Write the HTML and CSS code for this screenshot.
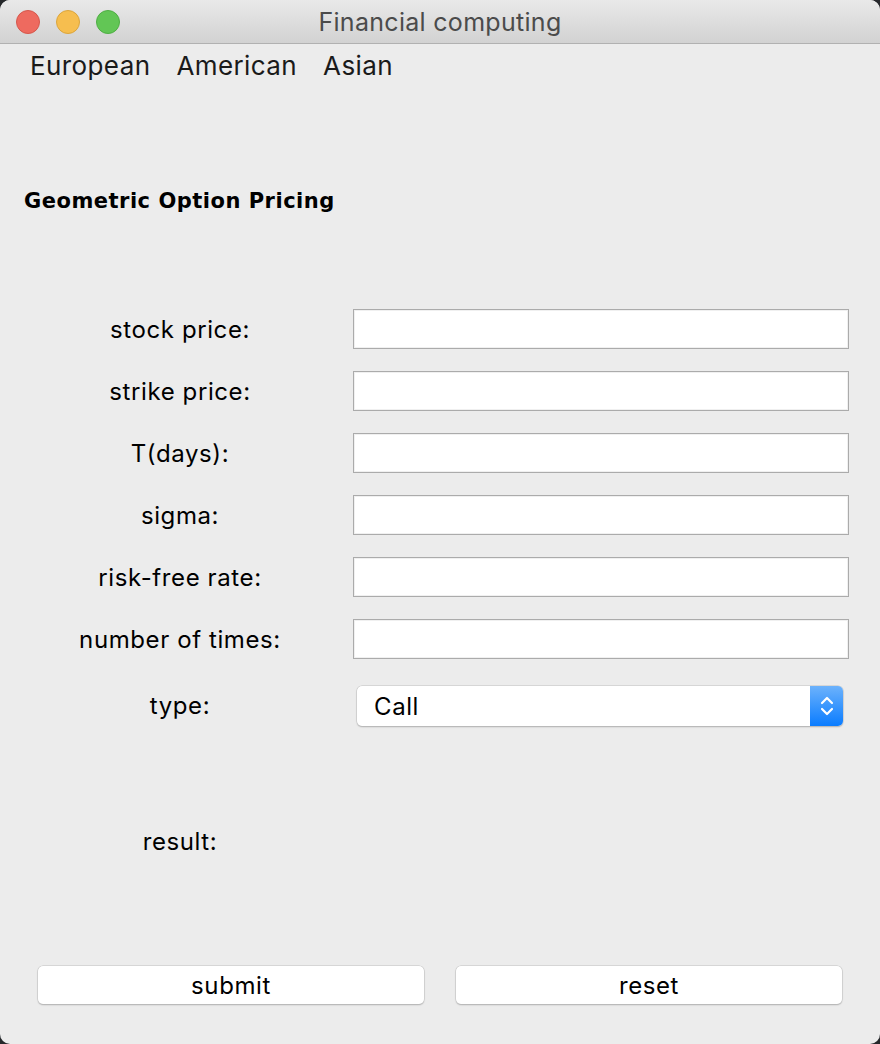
FILE: index.html
```html
<!DOCTYPE html>
<html>
<head>
<meta charset="utf-8">
<title>Financial computing</title>
<link rel="stylesheet" href="styles.css">
</head>
<body>
<div class="window">
  <div class="titlebar">
    <div class="lights">
      <span class="light red"></span>
      <span class="light yellow"></span>
      <span class="light green"></span>
    </div>
    <div class="title">Financial computing</div>
  </div>
  <div class="menubar">
    <span class="menu-item">European</span>
    <span class="menu-item">American</span>
    <span class="menu-item">Asian</span>
  </div>
  <div class="content">
    <h1 class="heading">Geometric Option Pricing</h1>
    <div class="form">
      <label class="label">stock price:</label>
      <div class="field"><input class="input" type="text"></div>
      <label class="label">strike price:</label>
      <div class="field"><input class="input" type="text"></div>
      <label class="label">T(days):</label>
      <div class="field"><input class="input" type="text"></div>
      <label class="label">sigma:</label>
      <div class="field"><input class="input" type="text"></div>
      <label class="label">risk-free rate:</label>
      <div class="field"><input class="input" type="text"></div>
      <label class="label">number of times:</label>
      <div class="field"><input class="input" type="text"></div>
      <label class="label type-label">type:</label>
      <div class="field type-field">
        <div class="select">
          <span class="select-value">Call</span>
          <span class="select-arrows">
            <svg width="16" height="28" viewBox="0 0 16 28">
              <path d="M3 11 L8 6 L13 11" fill="none" stroke="#fff" stroke-width="2.2" stroke-linecap="round" stroke-linejoin="round"/>
              <path d="M3 17 L8 22 L13 17" fill="none" stroke="#fff" stroke-width="2.2" stroke-linecap="round" stroke-linejoin="round"/>
            </svg>
          </span>
        </div>
      </div>
      <label class="label result-label">result:</label>
      <div class="field result-field"></div>
    </div>
  </div>
  <div class="buttons">
    <button class="btn">submit</button>
    <button class="btn">reset</button>
  </div>
</div>
</body>
</html>
```
FILE: styles.css
```css
html, body {
  margin: 0;
  padding: 0;
  background: #26282b;
}
.window {
  width: 880px;
  height: 1044px;
  background: #ececec;
  border-radius: 10px;
  overflow: hidden;
  display: flex;
  flex-direction: column;
  font-family: Inter, "Noto Sans", sans-serif;
  color: #000;
}
.titlebar {
  height: 43px;
  border-bottom: 1px solid #b1b1b1;
  background: linear-gradient(#e9e9e9, #d2d2d2);
  display: flex;
  align-items: center;
  justify-content: center;
  position: relative;
}
.lights {
  position: absolute;
  left: 16px;
  top: 10px;
  display: flex;
  gap: 16px;
}
.light {
  width: 24px;
  height: 24px;
  border-radius: 50%;
  box-sizing: border-box;
}
.red { background: #ee6a5f; border: 1px solid #d5574c; }
.yellow { background: #f6be4f; border: 1px solid #dba53c; }
.green { background: #62c655; border: 1px solid #4fae44; }
.title {
  font-size: 25px;
  color: #4b4b4b;
  letter-spacing: 0.3px;
}
.menubar {
  display: flex;
  gap: 26px;
  padding-left: 30px;
  height: 42px;
  padding-bottom: 4px;
  align-items: center;
  font-size: 26px;
  letter-spacing: 0.4px;
  color: #1a1a1a;
}
.content {
  display: flex;
  flex-direction: column;
}
.heading {
  margin: 97px 0 0 24px;
  height: 28px;
  font-family: "DejaVu Sans", sans-serif;
  font-weight: bold;
  font-size: 21px;
  letter-spacing: 0.5px;
  line-height: 28px;
}
.form {
  margin-top: 94px;
  display: grid;
  grid-template-columns: 353px 496px;
  grid-auto-rows: 40px;
  row-gap: 22px;
}
.label {
  display: flex;
  align-items: center;
  justify-content: center;
  padding-left: 7px;
  font-size: 24px;
  letter-spacing: 0.6px;
}
.input {
  display: block;
  width: 496px;
  height: 40px;
  box-sizing: border-box;
  margin: 0;
  border: 1px solid #ababab;
  box-shadow: inset 0 0 0 1px #f0f0f0;
  background: #fff;
  outline: none;
}
.type-label, .type-field {
  margin-top: 5px;
}
.type-label {
  padding-top: 4px;
}
.select {
  margin: 0 6px 0 4px;
  height: 40px;
  box-sizing: border-box;
  background: #fff;
  border-radius: 5px;
  box-shadow: 0 0 0 0.5px #c2c2c2, 0 1px 1.5px rgba(0,0,0,0.3);
  display: flex;
  align-items: center;
  overflow: hidden;
}
.select-value {
  flex: 1;
  padding-left: 17px;
  font-size: 24px;
  letter-spacing: 0.6px;
}
.select-arrows {
  width: 33px;
  height: 100%;
  background: linear-gradient(#6cb2fc, #0a7cff);
  display: flex;
  align-items: center;
  justify-content: center;
}
.result-label, .result-field {
  margin-top: 98px;
}
.buttons {
  margin-top: auto;
  margin-bottom: 40px;
  padding: 0 38px;
  display: flex;
  gap: 32px;
}
.btn {
  width: 386px;
  height: 38px;
  border: none;
  border-radius: 5px;
  background: #fff;
  box-shadow: 0 0 0 0.5px #c2c2c2, 0 1px 1.5px rgba(0,0,0,0.3);
  font-family: Inter, "Noto Sans", sans-serif;
  font-size: 24px;
  letter-spacing: 0.6px;
  color: #000;
  padding: 0;
}
```
